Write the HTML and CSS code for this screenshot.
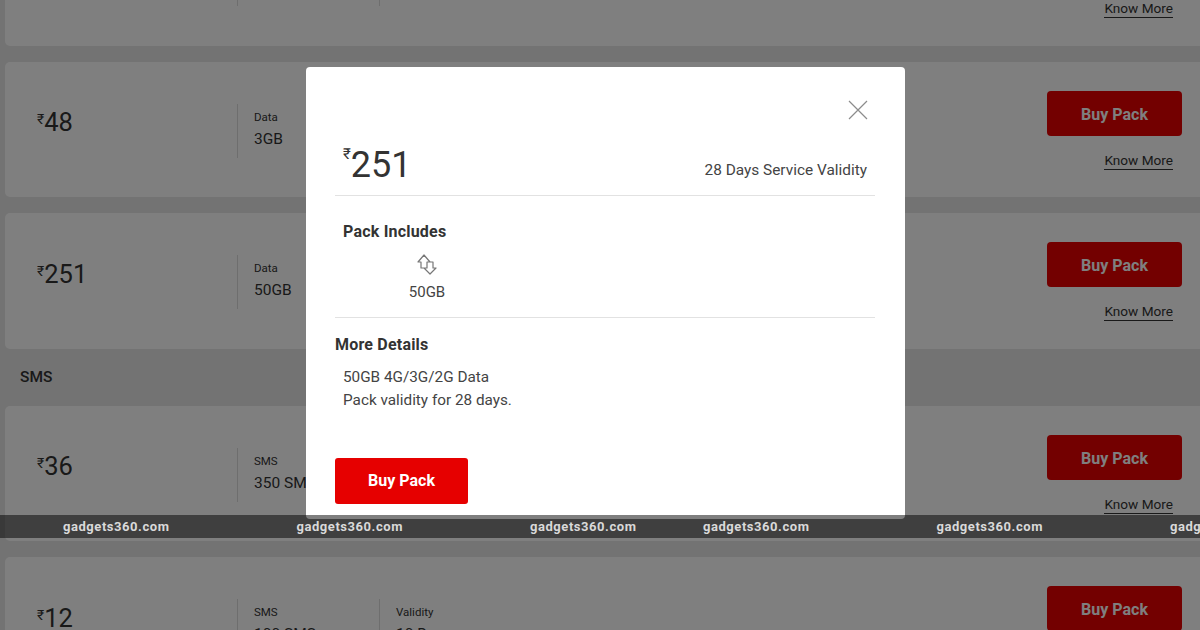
FILE: index.html
```html
<!DOCTYPE html>
<html lang="en">
<head>
<meta charset="UTF-8">
<title>Data Packs</title>
<link rel="stylesheet" href="styles.css">
</head>
<body>

<div class="pack-list">
  <div class="pack">
    <div class="price"></div>
    <div class="spec"></div>
    <div class="spec"></div>
    <div class="actions actions-clipped"><a class="know" href="#">Know More</a></div>
  </div>
  <div class="pack">
    <div class="price"><sup>₹</sup>48</div>
    <div class="spec"><span class="spec-label">Data</span><span class="spec-value">3GB</span></div>
    <div class="actions"><a class="buy" href="#">Buy Pack</a><a class="know" href="#">Know More</a></div>
  </div>
  <div class="pack">
    <div class="price"><sup>₹</sup>251</div>
    <div class="spec"><span class="spec-label">Data</span><span class="spec-value">50GB</span></div>
    <div class="actions"><a class="buy" href="#">Buy Pack</a><a class="know" href="#">Know More</a></div>
  </div>
  <h2 class="section-title">SMS</h2>
  <div class="pack">
    <div class="price"><sup>₹</sup>36</div>
    <div class="spec"><span class="spec-label">SMS</span><span class="spec-value">350 SMS</span></div>
    <div class="actions"><a class="buy" href="#">Buy Pack</a><a class="know" href="#">Know More</a></div>
  </div>
  <div class="pack">
    <div class="price"><sup>₹</sup>12</div>
    <div class="spec"><span class="spec-label">SMS</span><span class="spec-value">100 SMS</span></div>
    <div class="spec"><span class="spec-label">Validity</span><span class="spec-value">10 Days</span></div>
    <div class="actions"><a class="buy" href="#">Buy Pack</a><a class="know" href="#">Know More</a></div>
  </div>
</div>

<div class="overlay"></div>

<div class="modal">
  <div class="modal-close">
    <svg width="20" height="20" viewBox="0 0 20 20"><path d="M1 1 L19 19 M19 1 L1 19" fill="none" stroke="#8c8c8c" stroke-width="1.2"/></svg>
  </div>
  <div class="modal-head">
    <div class="modal-price"><sup>₹</sup>251</div>
    <div class="modal-validity">28 Days Service Validity</div>
  </div>
  <div class="includes">
    <h3 class="includes-title">Pack Includes</h3>
    <div class="includes-item">
      <svg width="20" height="21" viewBox="0 0 20 21"><path d="M7 1 L1 8 H4 V14 H7 L13 20 L19 14 H16 V8 H13 Z M13 8 H10 V14 H7" fill="none" stroke="#777" stroke-width="1.2" stroke-linejoin="round"/></svg>
      <span>50GB</span>
    </div>
  </div>
  <h3 class="details-title">More Details</h3>
  <p class="details-text">50GB 4G/3G/2G Data<br>Pack validity for 28 days.</p>
  <a class="modal-buy" href="#">Buy Pack</a>
</div>

<div class="watermark">
  <span class="mark">gadgets360.com</span>
  <span class="mark">gadgets360.com</span>
  <span class="mark mark-near">gadgets360.com</span>
  <span class="mark">gadgets360.com</span>
  <span class="mark">gadgets360.com</span>
  <span class="mark">gadgets360.com</span>
</div>

</body>
</html>
```

FILE: styles.css
```css
html, body {
  margin: 0;
  padding: 0;
  height: 630px;
  overflow: hidden;
}

body {
  position: relative;
  width: 1200px;
  font-family: Roboto, Arial, sans-serif;
  color: #333;
  background-color: #e6e6e6;
}

a {
  color: inherit;
  text-decoration: none;
}

.pack-list {
  display: flex;
  flex-direction: column;
  gap: 16px;
  margin-top: -90px;
  padding-left: 5px;
}

.pack {
  display: flex;
  flex: none;
  align-items: flex-start;
  height: 135.6px;
  padding-right: 18px;
  background-color: #fff;
  border-radius: 5px 0 0 5px;
}

.price {
  flex: none;
  width: 200px;
  padding: 42.6px 0 0 32px;
  font-size: 25.5px;
  line-height: 36px;
}

.price sup {
  font-size: 0.55em;
  line-height: 0;
  vertical-align: 0.5em;
}

.spec {
  display: flex;
  flex-direction: column;
  box-sizing: border-box;
  width: 142px;
  height: 54px;
  margin-top: 42px;
  padding: 5px 0 0 16px;
  border-left: 1px solid #ddd;
}

.spec-label {
  font-size: 11.5px;
  line-height: 16px;
}

.spec-value {
  margin-top: 5px;
  font-size: 15.5px;
  line-height: 18px;
}

.actions {
  display: flex;
  flex-direction: column;
  align-items: flex-end;
  margin-left: auto;
  padding-top: 29px;
}

.actions-clipped {
  padding-top: 74px;
}

.buy {
  width: 135px;
  height: 45px;
  line-height: 47px;
  text-align: center;
  font-size: 16px;
  font-weight: 700;
  color: #fff;
  background-color: #e60000;
  border-radius: 4px;
}

.know {
  margin: 16px 9px 0 0;
  font-size: 13.6px;
  line-height: 17px;
  border-bottom: 1px solid #333;
}

.section-title {
  margin: 2px 0 3px 15px;
  font-size: 15.5px;
  line-height: 20px;
  font-weight: 500;
}

.overlay {
  position: absolute;
  top: 0;
  left: 0;
  right: 0;
  bottom: 0;
  background-color: rgba(0, 0, 0, 0.5);
}

.modal {
  position: absolute;
  top: 67px;
  left: 306px;
  box-sizing: border-box;
  width: 599px;
  height: 452px;
  padding: 33px 30px 0 29px;
  background-color: #fff;
  border-radius: 4px;
}

.modal-close {
  display: flex;
  justify-content: flex-end;
  height: 20px;
  padding-right: 7px;
}

.modal-head {
  display: flex;
  justify-content: space-between;
  align-items: flex-end;
  height: 75px;
  padding: 0 8px;
  border-bottom: 1px solid #e2e2e2;
}

.modal-price {
  font-size: 36px;
  line-height: 50px;
  margin-bottom: 5px;
}

.modal-price sup {
  font-size: 0.42em;
  line-height: 0;
  vertical-align: 1.2em;
}

.modal-validity {
  font-size: 15.4px;
  line-height: 20px;
  margin-bottom: 15px;
  color: #444;
}

.includes {
  height: 122px;
  box-sizing: border-box;
  padding: 26px 8px 0;
  border-bottom: 1px solid #e2e2e2;
}

.includes-title,
.details-title {
  margin: 0;
  font-size: 16px;
  line-height: 20px;
  font-weight: 700;
  letter-spacing: 0.2px;
}

.includes-item {
  display: flex;
  flex-direction: column;
  align-items: center;
  width: 168px;
  margin-top: 12px;
  font-size: 15px;
  line-height: 18px;
  color: #444;
}

.includes-item span {
  margin-top: 8px;
}

.details-title {
  margin-top: 17px;
}

.details-text {
  margin: 11px 0 0 8px;
  font-size: 15.3px;
  line-height: 23px;
  color: #444;
}

.modal-buy {
  display: block;
  width: 133px;
  height: 46px;
  margin-top: 46px;
  line-height: 46px;
  text-align: center;
  font-size: 16px;
  font-weight: 700;
  color: #fff;
  background-color: #e60000;
  border-radius: 3px;
}

.watermark {
  position: absolute;
  top: 515px;
  left: 0;
  right: 0;
  display: flex;
  height: 23px;
  padding-left: 63px;
  white-space: nowrap;
  background-color: rgba(0, 0, 0, 0.5);
  overflow: hidden;
}

.mark {
  flex: none;
  width: 233.5px;
  font-size: 13px;
  line-height: 23px;
  font-weight: 700;
  letter-spacing: 0.55px;
  color: #d9d9d9;
}

.mark-near {
  width: 173px;
}
```
